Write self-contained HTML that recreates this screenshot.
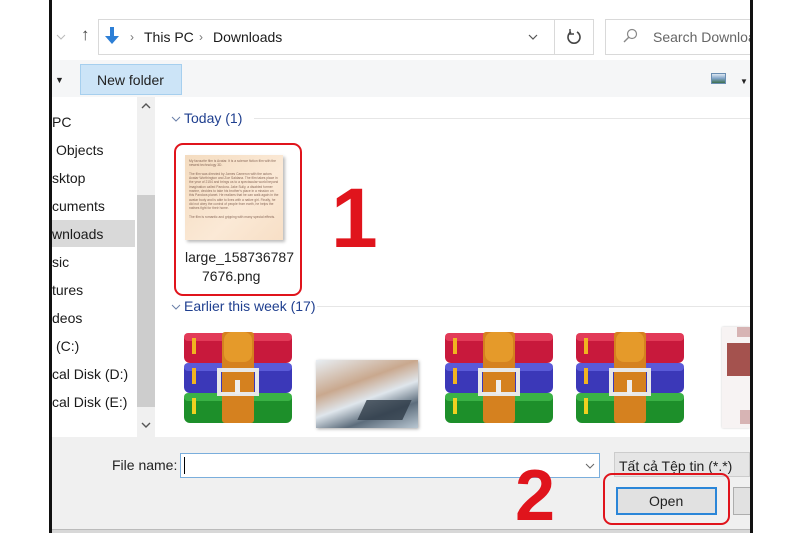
<!DOCTYPE html>
<html><head><meta charset="utf-8"><style>
*{margin:0;padding:0;box-sizing:border-box}
body{width:800px;height:533px;background:#fff;position:relative;overflow:hidden;font-family:"Liberation Sans","Noto Sans CJK SC",sans-serif;color:#1a1a1a}
.a{position:absolute}
.t{position:absolute;font-size:14px;white-space:nowrap;line-height:16px}
</style></head><body>
<div class="a" style="left:49px;top:0;width:3px;height:533px;background:#111"></div>
<div class="a" style="left:750px;top:0;width:3px;height:533px;background:#111"></div>
<div class="a" style="left:52px;top:0;width:698px;height:533px;background:#fff;overflow:hidden">
 <svg class="a" style="left:4px;top:33px" width="10" height="8" viewBox="0 0 10 8"><path d="M1 2l4 4 4-4" fill="none" stroke="#bbb" stroke-width="1"/></svg>
 <div class="t" style="left:29px;top:27px;color:#444;font-size:17px">↑</div>
 <svg class="a" style="left:53px;top:27px" width="14" height="18" viewBox="0 0 14 18"><path d="M5 0h4v9h5L7 17 0 9h5z" fill="#2d7fd6"/></svg>
 <div class="t" style="left:78px;top:29px;color:#777;font-size:12px">›</div>
 <div class="a" style="left:46px;top:19px;width:496px;height:36px;border:1px solid #d9d9d9"></div>
 <div class="t" style="left:92px;top:29px">This PC</div>
 <div class="t" style="left:147px;top:29px;color:#777;font-size:12px">›</div>
 <div class="t" style="left:161px;top:29px">Downloads</div>
 <svg class="a" style="left:476px;top:33px" width="10" height="8" viewBox="0 0 10 8"><path d="M1 2l4 4 4-4" fill="none" stroke="#555" stroke-width="1.2"/></svg>
 <div class="a" style="left:502px;top:19px;width:40px;height:36px;border:1px solid #d9d9d9"></div>
 <svg class="a" style="left:514px;top:29px" width="16" height="16" viewBox="0 0 16 16"><path d="M5 3A6 6 0 1 0 11 3" fill="none" stroke="#444" stroke-width="1.6"/><path d="M4 0v5h4" fill="none" stroke="#444" stroke-width="1.4"/></svg>
 <div class="a" style="left:553px;top:19px;width:160px;height:36px;border:1px solid #d9d9d9"></div>
 <svg class="a" style="left:570px;top:28px" width="16" height="16" viewBox="0 0 16 16"><circle cx="10" cy="6" r="4.5" fill="none" stroke="#888" stroke-width="1.2"/><path d="M7 9L2 14" stroke="#888" stroke-width="1.4"/></svg>
 <div class="t" style="left:601px;top:29px;color:#666">Search Downloads</div>
 <div class="a" style="left:0;top:60px;width:698px;height:37px;background:#f5f6f7"></div>
 <div class="t" style="left:3px;top:72px;font-size:9px;color:#222">▼</div>
 <div class="a" style="left:28px;top:64px;width:102px;height:31px;background:#cce4f7;border:1px solid #a6cfee"></div>
 <div class="t" style="left:45px;top:72px;color:#222">New folder</div>
 <div class="a" style="left:659px;top:73px;width:15px;height:11px;background:linear-gradient(#dde8f3,#7fa3c7 50%,#3d6f4d);border:1px solid #6a8eb2"></div>
 <div class="t" style="left:688px;top:74px;font-size:8px;color:#222">▼</div>
 <div class="a" style="left:0;top:220px;width:83px;height:27px;background:#d9d9d9"></div>
 <div class="t" style="left:0;top:114px">PC</div>
 <div class="t" style="left:4px;top:142px">Objects</div>
 <div class="t" style="left:0;top:170px">sktop</div>
 <div class="t" style="left:0;top:198px">cuments</div>
 <div class="t" style="left:0;top:226px">wnloads</div>
 <div class="t" style="left:0;top:254px">sic</div>
 <div class="t" style="left:0;top:282px">tures</div>
 <div class="t" style="left:0;top:310px">deos</div>
 <div class="t" style="left:4px;top:338px">(C:)</div>
 <div class="t" style="left:0;top:366px">cal Disk (D:)</div>
 <div class="t" style="left:0;top:394px">cal Disk (E:)</div>
 <div class="a" style="left:85px;top:97px;width:18px;height:340px;background:#f0f0f0"></div>
 <div class="a" style="left:85px;top:195px;width:18px;height:212px;background:#cdcdcd"></div>
 <svg class="a" style="left:89px;top:102px" width="10" height="8" viewBox="0 0 10 8"><path d="M1 6l4-4 4 4" fill="none" stroke="#555" stroke-width="1.4"/></svg>
 <svg class="a" style="left:89px;top:421px" width="10" height="8" viewBox="0 0 10 8"><path d="M1 2l4 4 4-4" fill="none" stroke="#555" stroke-width="1.4"/></svg>
 <svg class="a" style="left:119px;top:115px" width="10" height="8" viewBox="0 0 10 8"><path d="M1 2l4 4 4-4" fill="none" stroke="#6a7fa8" stroke-width="1"/></svg>
 <div class="t" style="left:132px;top:110px;color:#1f3f8f">Today (1)</div>
 <div class="a" style="left:202px;top:118px;width:496px;height:1px;background:#e6e6e6"></div>
 <div class="a" style="left:122px;top:143px;width:128px;height:153px;border:2px solid #e0141c;border-radius:9px"></div>
 <div class="a" style="left:133px;top:155px;width:98px;height:85px;background:linear-gradient(135deg,#f4dcc0,#fbe9d6 60%,#f7dfc6);box-shadow:2px 2px 3px #bbb;padding:4px;font-size:3.3px;line-height:4.3px;color:#8a6a5a;overflow:hidden">My favourite film is Avatar. It is a science fiction film with the newest technology 3D.<br><br>The film was directed by James Cameron with the actors Avatar Worthington and Zoe Saldana. The film takes place in the year of 2154 and brings us to a spectacular world beyond imagination called Pandora. Jake Sully, a disabled former marine, decides to take his brother's place in a mission on this Pandora planet. He realizes that he can walk again in the avatar body and is able to lives with a native girl. Finally, he did not obey the control of people from earth, he helps the natives fight for their home.<br><br>The film is romantic and gripping with many special effects.</div>
 <div class="t" style="left:133px;top:249px;color:#222">large_158736787</div>
 <div class="t" style="left:150px;top:268px;color:#222">7676.png</div>
 <div class="a" style="left:279px;top:176px;font-size:84px;font-weight:bold;color:#e0141c;line-height:84px">1</div>
 <svg class="a" style="left:119px;top:303px" width="10" height="8" viewBox="0 0 10 8"><path d="M1 2l4 4 4-4" fill="none" stroke="#6a7fa8" stroke-width="1"/></svg>
 <div class="t" style="left:132px;top:298px;color:#1f3f8f">Earlier this week (17)</div>
 <div class="a" style="left:265px;top:306px;width:433px;height:1px;background:#e6e6e6"></div>
 <svg width="0" height="0" style="position:absolute"><defs>
 <symbol id="rar" viewBox="0 0 108 91">
  <rect x="0" y="1" width="108" height="30" rx="6" fill="#c8193c"/><rect x="0" y="1" width="108" height="8" rx="4" fill="#e23a58"/>
  <rect x="0" y="31" width="108" height="30" rx="6" fill="#3b38b8"/><rect x="0" y="31" width="108" height="8" rx="4" fill="#5a5ad8"/>
  <rect x="0" y="61" width="108" height="30" rx="6" fill="#1d8f2a"/><rect x="0" y="61" width="108" height="8" rx="4" fill="#3ab245"/>
  <rect x="8" y="6" width="4" height="16" fill="#f0b420"/><rect x="8" y="36" width="4" height="16" fill="#f0b420"/><rect x="8" y="66" width="4" height="16" fill="#f0d020"/>
  <rect x="38" y="0" width="32" height="91" rx="3" fill="#d5811f"/><rect x="40" y="0" width="28" height="30" rx="8" fill="#e59a2a"/>
  <rect x="35" y="38" width="38" height="24" fill="none" stroke="#e8e8e8" stroke-width="4"/><rect x="51" y="48" width="5" height="14" fill="#eee"/>
 </symbol></defs></svg>
 <svg class="a" style="left:132px;top:332px" width="108" height="91"><use href="#rar"/></svg>
 <div class="a" style="left:264px;top:360px;width:102px;height:68px;background:linear-gradient(160deg,#e8eef3 0%,#c9a88e 35%,#dfe6ec 55%,#5d6d7c 75%,#b9c7d2 100%);box-shadow:1px 1px 3px #aaa"></div>
 <div class="a" style="left:310px;top:400px;width:45px;height:20px;background:#2f3c48;transform:skewX(-25deg);opacity:.8"></div>
 <svg class="a" style="left:393px;top:332px" width="108" height="91"><use href="#rar"/></svg>
 <svg class="a" style="left:524px;top:332px" width="108" height="91"><use href="#rar"/></svg>
 <div class="a" style="left:670px;top:327px;width:28px;height:101px;background:#f7f3f3;box-shadow:0 0 2px #ccc"></div>
 <div class="a" style="left:675px;top:343px;width:23px;height:33px;background:#a4524e"></div>
 <div class="a" style="left:685px;top:327px;width:13px;height:10px;background:#d7b4b4"></div>
 <div class="a" style="left:688px;top:410px;width:10px;height:14px;background:#d7b4b4"></div>
 <div class="a" style="left:0;top:437px;width:698px;height:96px;background:#f0f0f0"></div>
 <div class="a" style="left:0;top:529px;width:698px;height:4px;background:#d8d8d8;border-top:1px solid #bbb"></div>
 <div class="t" style="left:60px;top:457px;color:#222">File name:</div>
 <div class="a" style="left:128px;top:453px;width:420px;height:25px;background:#fff;border:1px solid #7aaedc"></div>
 <div class="a" style="left:132px;top:457px;width:1px;height:17px;background:#000"></div>
 <svg class="a" style="left:533px;top:462px" width="10" height="8" viewBox="0 0 10 8"><path d="M1 2l4 4 4-4" fill="none" stroke="#666" stroke-width="1"/></svg>
 <div class="a" style="left:562px;top:452px;width:136px;height:25px;background:#e5e5e5;border:1px solid #ccc"></div>
 <div class="t" style="left:567px;top:458px;color:#222">Tất cả Tệp tin (*.*)</div>
 <div class="a" style="left:463px;top:460px;font-size:72px;font-weight:bold;color:#e0141c;line-height:72px">2</div>
 <div class="a" style="left:551px;top:473px;width:127px;height:52px;border:2px solid #e0141c;border-radius:9px"></div>
 <div class="a" style="left:564px;top:487px;width:101px;height:28px;background:#e1e1e1;border:2px solid #2b86d8"></div>
 <div class="t" style="left:597px;top:493px;color:#222">Open</div>
 <div class="a" style="left:681px;top:487px;width:30px;height:28px;background:#e1e1e1;border:1px solid #adadad"></div>
</div>
</body></html>
